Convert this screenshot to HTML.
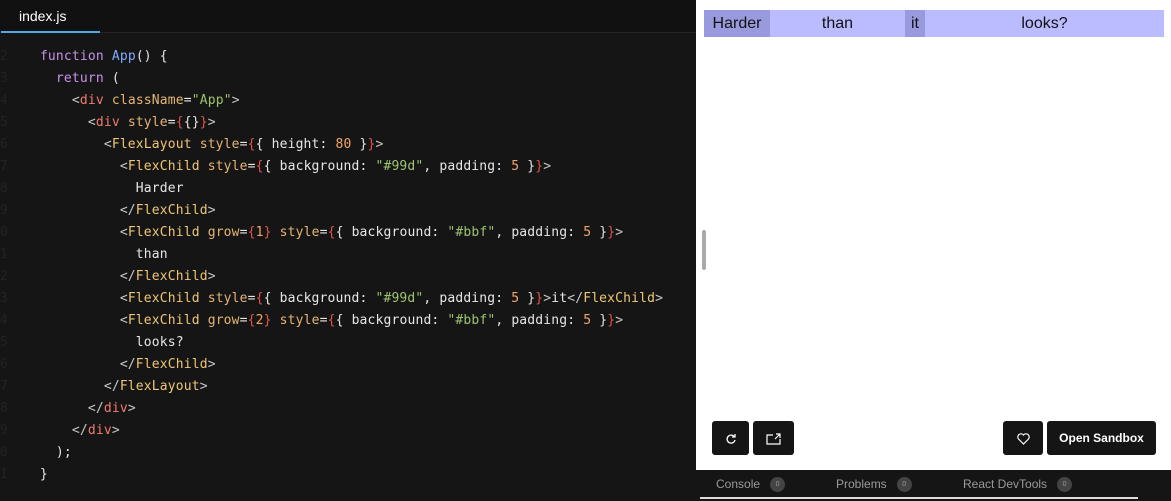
<!DOCTYPE html>
<html><head><style>
body{margin:0;width:1171px;height:501px;overflow:hidden;background:#151515;font-family:"Liberation Sans",sans-serif;position:relative}
.tabs{position:absolute;left:0;top:0;width:696px;height:32px;background:#111;border-bottom:1px solid #242424}
.tab{position:absolute;left:1px;top:0;width:99px;height:31px;border-bottom:2px solid #4fa8e8;color:#fff;font-size:14px;line-height:32px;text-indent:18px}
.code{position:absolute;left:0;top:46px;font-family:"DejaVu Sans Mono","Liberation Mono",monospace;font-size:13px;letter-spacing:0.16px;line-height:22px;color:#e6e6e6;white-space:pre}
.ln{position:absolute;left:-8px;top:46px;font-family:"DejaVu Sans Mono",monospace;font-size:13px;line-height:22px;color:#232323;white-space:pre}
.k{color:#c792ea}.f{color:#82aaff}.t{color:#ef7c6c}.a{color:#e6b673}.c{color:#f0c674}.s{color:#9cc46f}.b{color:#e05545}.n{color:#f5a56a}.p{color:#c8c8c8}
.prev{position:absolute;left:696px;top:0;width:475px;height:470px;background:#fff}
.bar{position:absolute;left:8px;top:10px;width:460px;height:27px;display:flex;font-size:16px;line-height:27px;color:#111}
.bar div{text-align:center}
.btn{position:absolute;top:421px;height:34px;background:#151515;border-radius:3px;color:#fff;font-size:12px;font-weight:bold;line-height:34px;text-align:center}
.bot{position:absolute;left:696px;top:470px;width:475px;height:31px;background:#151515;color:#9a9a9a;font-size:12px}
.bot span{position:absolute;top:7px}
.badge{display:inline-block;width:15px;height:15px;border-radius:50%;background:#444;color:#999;font-size:7px;line-height:15px;text-align:center;margin-left:10px;vertical-align:middle;font-style:normal}
</style></head><body>
<div class="tabs"><div class="tab">index.js</div></div>
<div class="ln">42
43
44
45
46
47
48
49
50
51
52
53
54
55
56
57
58
59
60
61</div>
<div class="code">     <span class="k">function</span> <span class="f">App</span>() {
       <span class="k">return</span> (
         <span class="p">&lt;</span><span class="t">div</span> <span class="a">className</span>=<span class="s">"App"</span><span class="p">&gt;</span>
           <span class="p">&lt;</span><span class="t">div</span> <span class="a">style</span>=<span class="b">{</span>{}<span class="b">}</span><span class="p">&gt;</span>
             <span class="p">&lt;</span><span class="c">FlexLayout</span> <span class="a">style</span>=<span class="b">{</span>{ height: <span class="n">80</span> }<span class="b">}</span><span class="p">&gt;</span>
               <span class="p">&lt;</span><span class="c">FlexChild</span> <span class="a">style</span>=<span class="b">{</span>{ background: <span class="s">"#99d"</span>, padding: <span class="n">5</span> }<span class="b">}</span><span class="p">&gt;</span>
                 Harder
               <span class="p">&lt;/</span><span class="c">FlexChild</span><span class="p">&gt;</span>
               <span class="p">&lt;</span><span class="c">FlexChild</span> <span class="a">grow</span>=<span class="b">{</span><span class="n">1</span><span class="b">}</span> <span class="a">style</span>=<span class="b">{</span>{ background: <span class="s">"#bbf"</span>, padding: <span class="n">5</span> }<span class="b">}</span><span class="p">&gt;</span>
                 than
               <span class="p">&lt;/</span><span class="c">FlexChild</span><span class="p">&gt;</span>
               <span class="p">&lt;</span><span class="c">FlexChild</span> <span class="a">style</span>=<span class="b">{</span>{ background: <span class="s">"#99d"</span>, padding: <span class="n">5</span> }<span class="b">}</span><span class="p">&gt;</span>it<span class="p">&lt;/</span><span class="c">FlexChild</span><span class="p">&gt;</span>
               <span class="p">&lt;</span><span class="c">FlexChild</span> <span class="a">grow</span>=<span class="b">{</span><span class="n">2</span><span class="b">}</span> <span class="a">style</span>=<span class="b">{</span>{ background: <span class="s">"#bbf"</span>, padding: <span class="n">5</span> }<span class="b">}</span><span class="p">&gt;</span>
                 looks?
               <span class="p">&lt;/</span><span class="c">FlexChild</span><span class="p">&gt;</span>
             <span class="p">&lt;/</span><span class="c">FlexLayout</span><span class="p">&gt;</span>
           <span class="p">&lt;/</span><span class="t">div</span><span class="p">&gt;</span>
         <span class="p">&lt;/</span><span class="t">div</span><span class="p">&gt;</span>
       );
     }</div>
<div class="prev">
  <div class="bar"><div style="width:66px;background:#99d">Harder</div><div style="width:135px;background:#bbf">than</div><div style="width:20px;background:#99d">it</div><div style="width:239px;background:#bbf">looks?</div></div>
  <div style="position:absolute;left:6px;top:230px;width:4px;height:40px;background:#aaa;border-radius:2px"></div>
  <div class="btn" style="left:16px;width:37px"><svg width="12" height="12" viewBox="0 0 12 12" style="vertical-align:middle"><path d="M9.5 4A4 4 0 1 0 10 7" fill="none" stroke="#fff" stroke-width="1.3"/><path d="M7 4h3V1" fill="none" stroke="#fff" stroke-width="1.3"/></svg></div>
  <div class="btn" style="left:57px;width:41px"><svg width="16" height="12" viewBox="0 0 16 12" style="vertical-align:middle"><path d="M7 2H1v9h13V6M10 1h4v4M14 1L9 6" fill="none" stroke="#fff" stroke-width="1.2"/></svg></div>
  <div class="btn" style="left:307px;width:40px"><svg width="13" height="12" viewBox="0 0 13 12" style="vertical-align:middle"><path d="M6.5 11L1.5 6A3 3 0 0 1 6.5 2A3 3 0 0 1 11.5 6Z" fill="none" stroke="#fff" stroke-width="1.2"/></svg></div>
  <div class="btn" style="left:351px;width:109px">Open Sandbox</div>
</div>
<div class="bot">
  <span style="left:20px">Console<i class="badge">0</i></span>
  <span style="left:140px">Problems<i class="badge">0</i></span>
  <span style="left:267px">React DevTools<i class="badge">0</i></span>
  <div style="position:absolute;left:4px;top:27px;width:438px;height:2px;background:#ddd"></div>
</div>
</body></html>
